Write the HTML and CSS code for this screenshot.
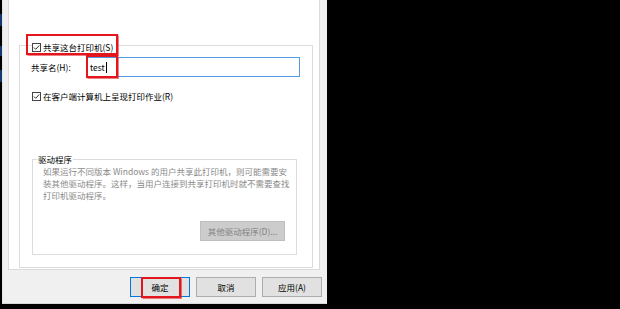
FILE: index.html
```html
<!DOCTYPE html>
<html lang="zh-CN">
<head>
<meta charset="utf-8">
<title>共享</title>
<link rel="stylesheet" href="styles.css">
</head>
<body>
<div class="screen">
  <div class="edge"></div>
  <div class="dialog">
    <div class="page">
      <div class="frame">
        <div class="row row-share">
          <span class="mark mark-top">
            <svg class="cb" viewBox="0 0 9 9" width="9" height="9"><rect x="0.5" y="0.5" width="8" height="8" fill="#fff" stroke="#444"/><path d="M1.9 4.5 L3.7 6.3 L7.2 2.5" fill="none" stroke="#333" stroke-width="1"/></svg>
            <span class="txt">共享这台打印机(S)</span>
            <span class="hl hl-share"></span>
          </span>
        </div>
        <div class="row row-name">
          <span class="label">共享名(H):</span>
          <div class="input"><span class="val">test</span><span class="caret"></span><span class="hl hl-name"></span></div>
        </div>
        <div class="row row-render">
          <span class="mark">
            <svg class="cb" viewBox="0 0 9 9" width="9" height="9"><rect x="0.5" y="0.5" width="8" height="8" fill="#fff" stroke="#444"/><path d="M1.9 4.5 L3.7 6.3 L7.2 2.5" fill="none" stroke="#333" stroke-width="1"/></svg>
            <span class="txt">在客户端计算机上呈现打印作业(R)</span>
          </span>
        </div>
        <div class="group">
          <div class="legend">驱动程序</div>
          <p class="desc">如果运行不同版本 Windows 的用户共享此打印机，则可能需要安<br>装其他驱动程序。这样，当用户连接到共享打印机时就不需要查找<br>打印机驱动程序。</p>
          <div class="btn btn-disabled">其他驱动程序(D)...</div>
        </div>
      </div>
    </div>
    <div class="buttons">
      <div class="btn btn-default">确定<span class="hl hl-ok"></span></div>
      <div class="btn">取消</div>
      <div class="btn">应用(A)</div>
    </div>
  </div>
</div>
</body>
</html>
```
FILE: styles.css
```css
* { box-sizing: border-box; }
html, body { margin: 0; padding: 0; background: #000; }
body {
  width: 620px;
  height: 309px;
  overflow: hidden;
  font-family: "Noto Sans CJK SC", "Noto Sans", sans-serif;
  font-size: 8.5px;
  color: #000;
}
.screen { display: flex; height: 309px; }
.edge {
  width: 2px;
  height: 309px;
  background: linear-gradient(to bottom, #000 0 14px, #17386e 14px 26px, #000 26px 46px, #17386e 46px 56px, #000 56px 70px, #17386e 70px 82px, #000 82px);
}
.dialog {
  width: 325px;
  height: 304px;
  background: #f0f0f0;
  border-left: 1px solid #e4e4e4;
  border-bottom: 1px solid #d8d8d8;
  display: flex;
  flex-direction: column;
}
.page {
  margin-left: 5px;
  width: 312px;
  height: 270px;
  background: #fff;
  border: 1px solid #dadada;
  border-top: 0;
  padding-top: 45px;
  padding-left: 10px;
}
.frame {
  width: 294px;
  height: 223px;
  border: 1px solid #dcdcdc;
}
.row { display: flex; align-items: center; height: 12px; line-height: 12px; }
.mark { position: relative; display: inline-flex; align-items: center; gap: 2px; }
.mark-top { background: #fff; padding-right: 5px; }
.cb { display: block; flex: none; }
.row-share { margin-top: -5px; padding-left: 12px; }
.row-name { margin-top: 4px; padding-left: 11px; height: 20px; }
.label { width: 55px; flex: none; }
.input {
  position: relative;
  width: 214px;
  height: 20px;
  border: 1px solid #4f9ae0;
  padding-left: 3px;
  display: flex;
  align-items: center;
  color: #000;
}
.caret { width: 1px; height: 11px; background: #000; margin-left: 1px; }
.row-render { margin-top: 13px; padding-left: 12px; }
.hl {
  position: absolute;
  border: 2px solid #e3161d;
  box-shadow: 0 0 1px 0.5px rgba(227, 22, 29, 0.55);
}
.hl-share { left: -6px; top: -7px; width: 92px; height: 21px; }
.hl-name { left: -1px; top: -3px; width: 32px; height: 23px; }
.group {
  margin-top: 57px;
  margin-left: 12px;
  width: 265px;
  height: 96px;
  border: 1px solid #dcdcdc;
  padding-left: 4px;
  display: flex;
  flex-direction: column;
}
.legend {
  margin-top: -7px;
  width: fit-content;
  background: #fff;
  padding: 0 1px;
  line-height: 12px;
  color: #000;
}
.desc {
  margin: 0 0 0 6px;
  line-height: 12px;
  color: #8a8a8a;
  white-space: nowrap;
}
.btn {
  width: 60px;
  height: 20px;
  border: 1px solid #adadad;
  background: #e1e1e1;
  display: flex;
  align-items: center;
  justify-content: center;
  line-height: 12px;
  color: #000;
  flex: none;
}
.btn-disabled {
  align-self: flex-end;
  margin-top: 20px;
  margin-right: 11px;
  width: 85px;
  background: #cccccc;
  border-color: #bfbfbf;
  color: #838383;
}
.buttons {
  margin-top: 7px;
  display: flex;
  justify-content: flex-end;
  gap: 6px;
  padding-right: 5px;
}
.btn-default { position: relative; border-color: #0078d7; }
.hl-ok { left: 10px; top: -1px; width: 40px; height: 21px; }
```
